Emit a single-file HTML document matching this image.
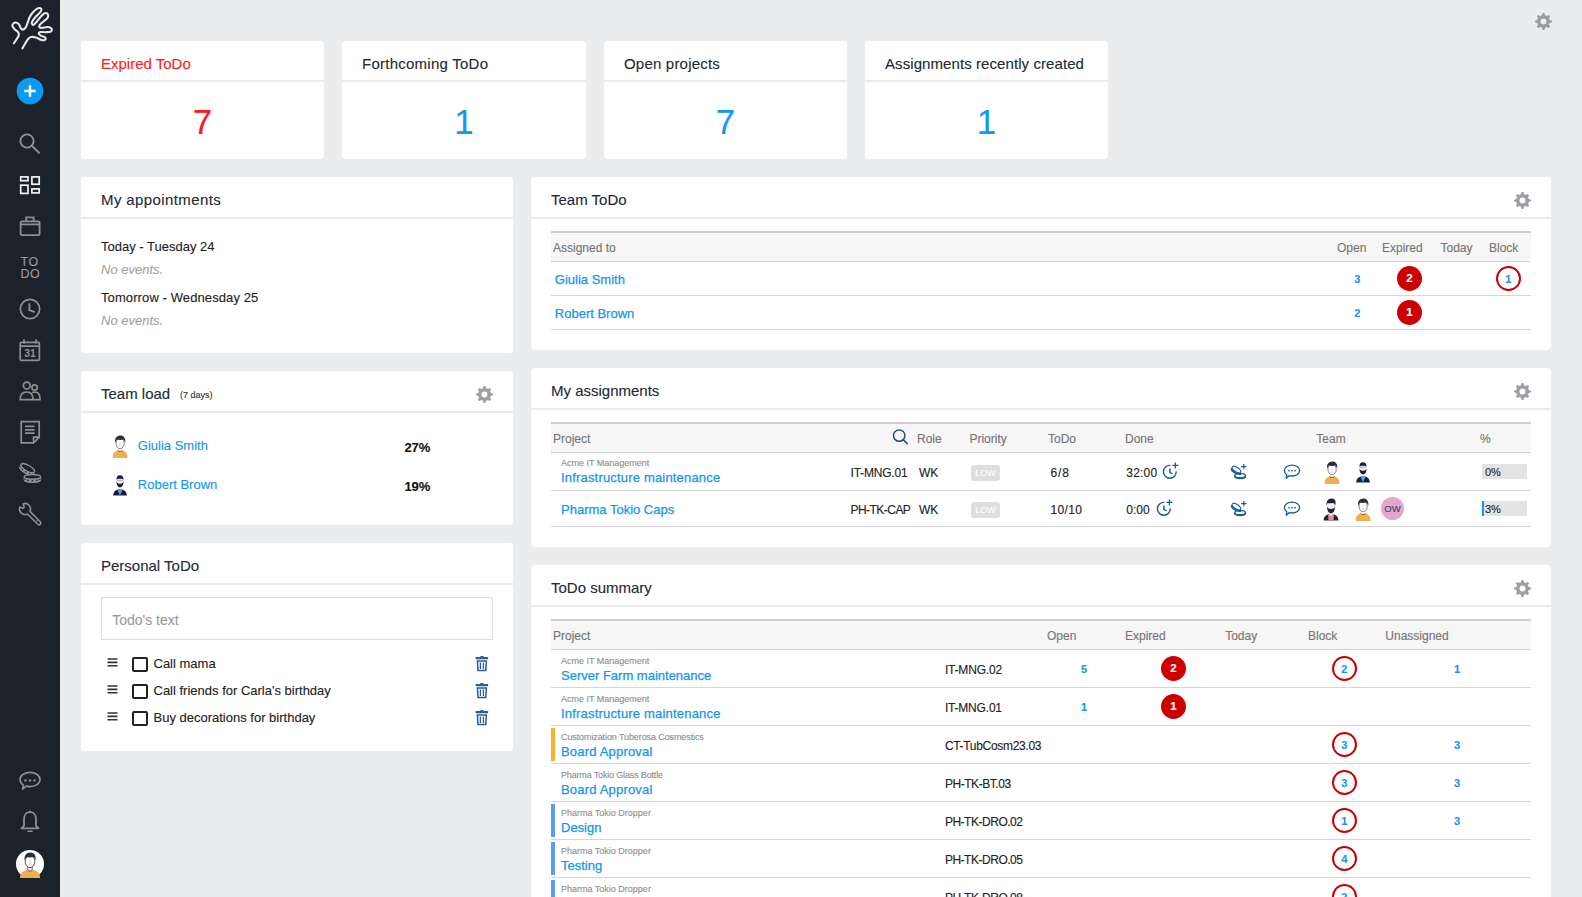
<!DOCTYPE html>
<html><head><meta charset="utf-8"><style>
html,body{margin:0;padding:0;width:1582px;height:897px;overflow:hidden;background:#ebecee;font-family:"Liberation Sans",sans-serif;}
.t,.r,.s{position:absolute;}
.t{white-space:nowrap;-webkit-text-stroke:0.12px currentColor;}
</style></head><body>
<div class="r" style="left:0px;top:0px;width:60px;height:897px;background:#1c222b;"></div>
<svg class="s" style="left:0px;top:0px;" width="60" height="60" viewBox="0 0 60 60"><path d="M13.90 43.30 C14.70 42.02 17.98 37.42 18.70 35.60 C19.42 33.78 18.92 33.48 18.20 32.40 C17.48 31.32 15.38 30.27 14.40 29.10 C13.42 27.93 12.20 26.50 12.30 25.40 C12.40 24.30 13.93 22.72 15.00 22.50 C16.07 22.28 17.73 23.15 18.70 24.10 C19.67 25.05 20.15 27.28 20.80 28.20 C21.45 29.12 21.80 29.70 22.60 29.60 C23.40 29.50 24.72 28.87 25.60 27.60 C26.48 26.33 27.22 23.77 27.90 22.00 C28.58 20.23 28.82 18.67 29.70 17.00 C30.58 15.33 32.02 13.37 33.20 12.00 C34.38 10.63 35.67 9.47 36.80 8.80 C37.93 8.13 39.22 7.83 40.00 8.00 C40.78 8.17 41.52 9.03 41.50 9.80 C41.48 10.57 40.90 11.40 39.90 12.60 C38.90 13.80 36.82 15.43 35.50 17.00 C34.18 18.57 32.52 20.73 32.00 22.00 C31.48 23.27 32.03 24.20 32.40 24.60 C32.77 25.00 33.53 24.83 34.20 24.40 C34.87 23.97 35.35 23.23 36.40 22.00 C37.45 20.77 39.23 18.40 40.50 17.00 C41.77 15.60 42.95 14.23 44.00 13.60 C45.05 12.97 46.10 12.90 46.80 13.20 C47.50 13.50 48.13 14.53 48.20 15.40 C48.27 16.27 48.10 17.30 47.20 18.40 C46.30 19.50 44.07 20.90 42.80 22.00 C41.53 23.10 40.10 24.07 39.60 25.00 C39.10 25.93 39.33 27.13 39.80 27.60 C40.27 28.07 41.02 27.90 42.40 27.80 C43.78 27.70 46.57 26.83 48.10 27.00 C49.63 27.17 51.15 28.03 51.60 28.80 C52.05 29.57 51.82 31.03 50.80 31.60 C49.78 32.17 47.23 32.13 45.50 32.20 C43.77 32.27 41.52 31.73 40.40 32.00 C39.28 32.27 38.67 33.17 38.80 33.80 C38.93 34.43 40.17 35.22 41.20 35.80 C42.23 36.38 44.33 36.67 45.00 37.30 C45.67 37.93 45.78 39.15 45.20 39.60 C44.62 40.05 43.03 40.37 41.50 40.00 C39.97 39.63 37.75 37.90 36.00 37.40 C34.25 36.90 32.37 36.68 31.00 37.00 C29.63 37.32 29.23 37.40 27.80 39.30 C26.37 41.20 23.30 46.88 22.40 48.40" fill="none" stroke="#e6e6e6" stroke-width="2.1" stroke-linecap="round" stroke-linejoin="round"/></svg>
<svg class="s" style="left:16px;top:77px;" width="28" height="28" viewBox="0 0 28 28"><circle cx="14" cy="14" r="13.3" fill="#0c9bf3"/><path d="M8.3 14H19.7M14 8.3V19.7" stroke="#fff" stroke-width="2.4"/></svg>
<svg class="s" style="left:15px;top:128px;" width="30" height="30" viewBox="0 0 30 30"><circle cx="12" cy="13" r="6.6" fill="none" stroke="#8d8f93" stroke-width="1.9"/><path d="M16.8 17.8L24.6 25.3" stroke="#8d8f93" stroke-width="1.9"/></svg>
<svg class="s" style="left:15px;top:170px;" width="30" height="30" viewBox="0 0 30 30"><g fill="none" stroke="#f2f2f2" stroke-width="1.7"><rect x="5.7" y="6.9" width="7.3" height="3.8"/><rect x="5.7" y="15.2" width="7.3" height="8.2"/><rect x="16.9" y="6.9" width="7.3" height="7.3"/><rect x="16.9" y="18.9" width="7.3" height="4"/></g></svg>
<svg class="s" style="left:15px;top:211px;" width="30" height="30" viewBox="0 0 30 30"><g fill="none" stroke="#8d8f93" stroke-width="1.8"><rect x="5.6" y="10.4" width="19" height="13.8" rx="1.6"/><path d="M5.6 13.4H24.6"/><path d="M11.2 10.2V6.4H18.6V10.2"/></g></svg>
<div class="t" style="left:20.60px;top:256.02px;font-size:12.5px;line-height:12.5px;color:#9a9b9e;font-weight:400;font-style:normal;letter-spacing:0.4px;">TO</div>
<div class="t" style="left:20.60px;top:268.12px;font-size:12.5px;line-height:12.5px;color:#9a9b9e;font-weight:400;font-style:normal;letter-spacing:0.4px;">DO</div>
<svg class="s" style="left:15px;top:294px;" width="30" height="30" viewBox="0 0 30 30"><g fill="none" stroke="#8d8f93" stroke-width="1.8"><circle cx="15" cy="15" r="9.6"/><path d="M14.4 9.2V16.2L19.8 18.2"/></g></svg>
<svg class="s" style="left:15px;top:335px;" width="30" height="30" viewBox="0 0 30 30"><g fill="none" stroke="#8d8f93" stroke-width="1.7"><rect x="5.2" y="7.4" width="19.2" height="18" rx="1.2"/><path d="M5.2 11.2H24.4M9 4.2V8.4M21 4.2V8.4"/></g><text x="15.1" y="22.2" font-family="Liberation Sans" font-size="10.4" font-weight="700" fill="#8d8f93" text-anchor="middle">31</text></svg>
<svg class="s" style="left:15px;top:376px;" width="30" height="30" viewBox="0 0 30 30"><g fill="none" stroke="#8d8f93" stroke-width="1.7"><circle cx="11.8" cy="9.6" r="3.4"/><circle cx="19.6" cy="11.6" r="2.7"/><path d="M5.2 23.6C5.2 18.8 7.8 16 11.6 16C15.4 16 18 18.8 18 23.6Z"/><path d="M17.2 16.8C18 16.2 18.8 16 19.8 16C23 16 25 18.8 25 23.6H18"/></g></svg>
<svg class="s" style="left:15px;top:417px;" width="30" height="30" viewBox="0 0 30 30"><g fill="none" stroke="#8d8f93" stroke-width="1.7"><path d="M6.2 4.6H24.2V20.2L18.6 25.8H6.2Z"/><path d="M24.2 20.2H18.6V25.8"/><path d="M10 9.4H19.6M10 12.8H19.6M10 16.2H19.6"/></g></svg>
<svg class="s" style="left:15px;top:458px;" width="30" height="30" viewBox="0 0 30 30"><g transform="rotate(30 12.8 10.2)"><path d="M5.20 10.20A7.6 2.9 0 0 0 20.40 10.20L20.40 12.80A7.6 2.9 0 0 1 5.20 12.80Z" fill="#8d8f93" stroke="#8d8f93" stroke-width="1.1"/><rect x="5.35" y="11.62" width="1.6" height="1.4" fill="#1c222b"/><rect x="7.89" y="12.96" width="1.6" height="1.4" fill="#1c222b"/><rect x="12.00" y="13.47" width="1.6" height="1.4" fill="#1c222b"/><rect x="16.11" y="12.96" width="1.6" height="1.4" fill="#1c222b"/><rect x="18.65" y="11.62" width="1.6" height="1.4" fill="#1c222b"/><ellipse cx="12.8" cy="10.2" rx="7.6" ry="2.9" fill="#1c222b" stroke="#8d8f93" stroke-width="1.3"/></g><g transform="rotate(0 17.4 18.8)"><path d="M9.20 18.80A8.2 2.3 0 0 0 25.60 18.80L25.60 22.10A8.2 2.3 0 0 1 9.20 22.10Z" fill="#8d8f93" stroke="#8d8f93" stroke-width="1.1"/><rect x="9.43" y="20.40" width="1.6" height="1.4" fill="#1c222b"/><rect x="12.17" y="21.46" width="1.6" height="1.4" fill="#1c222b"/><rect x="16.60" y="21.87" width="1.6" height="1.4" fill="#1c222b"/><rect x="21.03" y="21.46" width="1.6" height="1.4" fill="#1c222b"/><rect x="23.77" y="20.40" width="1.6" height="1.4" fill="#1c222b"/><ellipse cx="17.4" cy="18.8" rx="8.2" ry="2.3" fill="#1c222b" stroke="#8d8f93" stroke-width="1.3"/></g></svg>
<svg class="s" style="left:15px;top:499px;" width="30" height="30" viewBox="0 0 30 30"><path d="M12.41 14.95L22.73 25.27A1.8 1.8 0 0 0 25.27 22.73L14.95 12.41A5.5 5.5 0 0 0 8.12 4.83L9.3 8L8 9.3L4.83 8.12A5.5 5.5 0 0 0 12.41 14.95Z" fill="none" stroke="#8d8f93" stroke-width="1.6" stroke-linejoin="round"/><circle cx="22" cy="21.8" r="0.8" fill="#8d8f93"/></svg>
<svg class="s" style="left:15px;top:765px;" width="30" height="30" viewBox="0 0 30 30"><path d="M15 7.4C20.6 7.4 25 10.6 25 14.6C25 18.6 20.6 21.6 15 21.6C13.6 21.6 12.4 21.4 11.2 21.1L7.6 24.2L8.4 20.2C6.2 18.8 5 16.8 5 14.6C5 10.6 9.4 7.4 15 7.4Z" fill="none" stroke="#8d8f93" stroke-width="1.6" stroke-linejoin="round"/><circle cx="10.4" cy="15.4" r="1.2" fill="#8d8f93"/><circle cx="15" cy="15.4" r="1.2" fill="#8d8f93"/><circle cx="19.5" cy="15.4" r="1.2" fill="#8d8f93"/></svg>
<svg class="s" style="left:15px;top:806px;" width="30" height="30" viewBox="0 0 30 30"><g fill="none" stroke="#8d8f93" stroke-width="1.8" stroke-linejoin="round"><path d="M15 6.2C18.6 6.2 21 9 21 13V19.8L23.6 22.4H6.4L9 19.8V13C9 9 11.4 6.2 15 6.2Z"/></g><circle cx="15" cy="5.6" r="1.1" fill="#8d8f93"/><path d="M13 25.2H17" stroke="#8d8f93" stroke-width="1.6" stroke-linecap="round"/></svg>
<div class="r" style="left:16px;top:850px;width:28px;height:28px;border-radius:50%;background:#fff;overflow:hidden"></div>
<svg class="s" style="left:16px;top:850px;" width="28" height="28" viewBox="0 0 28 28"><path d="M4 28C4 22.6 7.6 19.8 14 19.6C20.4 19.8 24 22.6 24 28Z" fill="#efb14e"/><path d="M11.8 16V20.2C12.6 21.4 15.4 21.4 16.2 20.2V16Z" fill="#fff" stroke="#2a2d3e" stroke-width="0.7"/><ellipse cx="14" cy="11.6" rx="4.8" ry="6" fill="#fff" stroke="#2a2d3e" stroke-width="0.8"/><path d="M8.6 10.6C7.8 5.8 10.4 2.4 14.2 2.4C18 2.4 20.4 5.2 19.6 10.6C19 8.4 18 7.2 17.2 7C15.2 7.6 12.8 7.6 10.6 7C9.8 7.8 9.2 9 8.6 10.6Z" fill="#2a2d3e"/><path d="M14 9.6V13.8M12.2 15H15.8" stroke="#e8a0a8" stroke-width="0.7"/></svg>
<svg class="s" style="left:1534.5px;top:12.5px;" width="17" height="17" viewBox="0 0 17 17"><path fill-rule="evenodd" d="M14.77 6.93 L16.96 7.63 L16.96 9.37 L14.77 10.07 L14.04 11.82 L15.09 13.87 L13.87 15.09 L11.82 14.04 L10.07 14.77 L9.37 16.96 L7.63 16.96 L6.93 14.77 L5.18 14.04 L3.13 15.09 L1.91 13.87 L2.96 11.82 L2.23 10.07 L0.04 9.37 L0.04 7.63 L2.23 6.93 L2.96 5.18 L1.91 3.13 L3.13 1.91 L5.18 2.96 L6.93 2.23 L7.63 0.04 L9.37 0.04 L10.07 2.23 L11.82 2.96 L13.87 1.91 L15.09 3.13 L14.04 5.18Z M11.47 8.50 A2.97 2.97 0 1 0 5.53 8.50 A2.97 2.97 0 1 0 11.47 8.50Z" fill="#9a9ca1"/></svg>
<div class="r" style="left:81px;top:41px;width:243px;height:118px;background:#fff;border-radius:4px;"></div>
<div class="r" style="left:81px;top:80px;width:243px;height:2px;background:#e9eaed;"></div>
<div class="t" style="left:101.00px;top:56.30px;font-size:15px;line-height:15px;color:#ff2020;font-weight:400;font-style:normal;letter-spacing:0px;">Expired ToDo</div>
<div class="t" style="left:52.50px;width:300px;text-align:center;top:104.17px;font-size:35px;line-height:35px;color:#ff1a1a;font-weight:400;font-style:normal;">7</div>
<div class="r" style="left:342px;top:41px;width:244px;height:118px;background:#fff;border-radius:4px;"></div>
<div class="r" style="left:342px;top:80px;width:244px;height:2px;background:#e9eaed;"></div>
<div class="t" style="left:362.00px;top:56.30px;font-size:15px;line-height:15px;color:#222a33;font-weight:400;font-style:normal;letter-spacing:0.25px;">Forthcoming ToDo</div>
<div class="t" style="left:314.00px;width:300px;text-align:center;top:104.17px;font-size:35px;line-height:35px;color:#0f99f2;font-weight:400;font-style:normal;">1</div>
<div class="r" style="left:604px;top:41px;width:243px;height:118px;background:#fff;border-radius:4px;"></div>
<div class="r" style="left:604px;top:80px;width:243px;height:2px;background:#e9eaed;"></div>
<div class="t" style="left:624.00px;top:56.30px;font-size:15px;line-height:15px;color:#222a33;font-weight:400;font-style:normal;letter-spacing:0.2px;">Open projects</div>
<div class="t" style="left:575.50px;width:300px;text-align:center;top:104.17px;font-size:35px;line-height:35px;color:#0f99f2;font-weight:400;font-style:normal;">7</div>
<div class="r" style="left:865px;top:41px;width:243px;height:118px;background:#fff;border-radius:4px;"></div>
<div class="r" style="left:865px;top:80px;width:243px;height:2px;background:#e9eaed;"></div>
<div class="t" style="left:885.00px;top:56.30px;font-size:15px;line-height:15px;color:#222a33;font-weight:400;font-style:normal;letter-spacing:0.08px;">Assignments recently created</div>
<div class="t" style="left:836.50px;width:300px;text-align:center;top:104.17px;font-size:35px;line-height:35px;color:#0f99f2;font-weight:400;font-style:normal;">1</div>
<div class="r" style="left:81px;top:177px;width:432px;height:176px;background:#fff;border-radius:4px;"></div>
<div class="r" style="left:81px;top:217px;width:432px;height:2px;background:#e9eaed;"></div>
<div class="t" style="left:101.00px;top:192.30px;font-size:15px;line-height:15px;color:#222a33;font-weight:400;font-style:normal;letter-spacing:0.4px;">My appointments</div>
<div class="t" style="left:101.00px;top:240.20px;font-size:13px;line-height:13px;color:#1d1d1d;font-weight:400;font-style:normal;">Today - Tuesday 24</div>
<div class="t" style="left:101.00px;top:262.80px;font-size:13px;line-height:13px;color:#a3a3a3;font-weight:400;font-style:italic;">No events.</div>
<div class="t" style="left:101.00px;top:291.00px;font-size:13px;line-height:13px;color:#1d1d1d;font-weight:400;font-style:normal;letter-spacing:0.1px;">Tomorrow - Wednesday 25</div>
<div class="t" style="left:101.00px;top:313.70px;font-size:13px;line-height:13px;color:#a3a3a3;font-weight:400;font-style:italic;">No events.</div>
<div class="r" style="left:81px;top:371px;width:432px;height:154px;background:#fff;border-radius:4px;"></div>
<div class="r" style="left:81px;top:411px;width:432px;height:2px;background:#e9eaed;"></div>
<div class="t" style="left:101.00px;top:386.30px;font-size:15px;line-height:15px;color:#222a33;font-weight:400;font-style:normal;letter-spacing:0px;">Team load</div>
<svg class="s" style="left:475.5px;top:386.0px;" width="17" height="17" viewBox="0 0 17 17"><path fill-rule="evenodd" d="M14.77 6.93 L16.96 7.63 L16.96 9.37 L14.77 10.07 L14.04 11.82 L15.09 13.87 L13.87 15.09 L11.82 14.04 L10.07 14.77 L9.37 16.96 L7.63 16.96 L6.93 14.77 L5.18 14.04 L3.13 15.09 L1.91 13.87 L2.96 11.82 L2.23 10.07 L0.04 9.37 L0.04 7.63 L2.23 6.93 L2.96 5.18 L1.91 3.13 L3.13 1.91 L5.18 2.96 L6.93 2.23 L7.63 0.04 L9.37 0.04 L10.07 2.23 L11.82 2.96 L13.87 1.91 L15.09 3.13 L14.04 5.18Z M11.47 8.50 A2.97 2.97 0 1 0 5.53 8.50 A2.97 2.97 0 1 0 11.47 8.50Z" fill="#9c9fa5"/></svg>
<div class="t" style="left:180.00px;top:391.38px;font-size:9px;line-height:9px;color:#333;font-weight:400;font-style:normal;">(7 days)</div>
<svg class="s" style="left:112px;top:434px;" width="16" height="24" viewBox="0 0 16 24"><path d="M0.7 23.4C0.7 18.8 3.4 16.2 8 16C12.6 16.2 15.5 18.8 15.5 23.4C15.5 23.8 15.2 24 14.8 24H1.4C1 24 0.7 23.8 0.7 23.4Z" fill="#efb14e"/><path d="M5.6 16.4C6.4 17.6 9.8 17.6 10.6 16.4" fill="none" stroke="#2a2d3e" stroke-width="0.7"/><path d="M6.6 13.2V16.6C7.2 17.2 9 17.2 9.6 16.6V13.2Z" fill="#fff"/><ellipse cx="8.1" cy="9.4" rx="4.1" ry="5.4" fill="#fff" stroke="#2a2d3e" stroke-width="0.6"/><path d="M3.2 8.8C2.4 4.4 4.6 1.4 8.2 1.4C11.8 1.4 14 4 13.2 8.8C12.8 7.4 12.2 6.2 11.2 5.6C9.2 6.2 6.8 6.2 5 5.6C4.2 6.4 3.6 7.4 3.2 8.8Z" fill="#2a2d3e"/><path d="M8 7.8V11.2M6.6 12.2H9.4" stroke="#e8a0a8" stroke-width="0.6"/></svg>
<div class="t" style="left:137.80px;top:439.30px;font-size:13px;line-height:13px;color:#1296f0;font-weight:400;font-style:normal;">Giulia Smith</div>
<div class="t" style="left:404.40px;top:440.50px;font-size:13px;line-height:13px;color:#111;font-weight:700;font-style:normal;">27%</div>
<svg class="s" style="left:112px;top:473px;" width="16" height="24" viewBox="0 0 16 24"><path d="M1.2 22.4C1.2 18.6 3.8 16.4 8 16.2C12.2 16.4 14.8 18.6 14.8 22.4Z" fill="#15213f"/><path d="M5.4 16.6L8 22.4L10.6 16.6C9.8 16.3 6.2 16.3 5.4 16.6Z" fill="#6f9ad6"/><ellipse cx="8" cy="8.4" rx="3.8" ry="4.6" fill="#e9e9ef"/><path d="M4.4 8.8C4.6 12.6 6 14.4 8 14.4C10 14.4 11.4 12.6 11.6 8.8C10.8 10.4 9.4 10.8 8 10.8C6.6 10.8 5.2 10.4 4.4 8.8Z" fill="#15213f"/><path d="M4.4 6.8C4.4 3.6 5.8 2.2 8 2.2C10.2 2.2 11.6 3.6 11.6 6.8C10.6 5.4 5.4 5.4 4.4 6.8Z" fill="#15213f"/><path d="M4.6 7.4H11.4" stroke="#9aa0b0" stroke-width="0.7"/></svg>
<div class="t" style="left:137.80px;top:478.20px;font-size:13px;line-height:13px;color:#1296f0;font-weight:400;font-style:normal;">Robert Brown</div>
<div class="t" style="left:404.40px;top:479.50px;font-size:13px;line-height:13px;color:#111;font-weight:700;font-style:normal;">19%</div>
<div class="r" style="left:81px;top:543px;width:432px;height:208px;background:#fff;border-radius:4px;"></div>
<div class="r" style="left:81px;top:583px;width:432px;height:2px;background:#e9eaed;"></div>
<div class="t" style="left:101.00px;top:558.30px;font-size:15px;line-height:15px;color:#222a33;font-weight:400;font-style:normal;letter-spacing:0px;">Personal ToDo</div>
<div class="r" style="left:101px;top:597px;width:392px;height:43px;box-sizing:border-box;border:1px solid #dcdcdc;background:#fff"></div>
<div class="t" style="left:112.20px;top:613.15px;font-size:14px;line-height:14px;color:#9a9a9a;font-weight:400;font-style:normal;">Todo's text</div>
<svg class="s" style="left:107px;top:658px;" width="11" height="9" viewBox="0 0 11 9"><path d="M0.5 1H10.5M0.5 4.4H10.5M0.5 7.8H10.5" stroke="#333" stroke-width="1.6"/></svg>
<div class="r" style="left:132px;top:657px;width:16px;height:15px;box-sizing:border-box;border:2px solid #222;border-radius:2px;background:#fff"></div>
<div class="t" style="left:153.50px;top:657.00px;font-size:13px;line-height:13px;color:#222;font-weight:400;font-style:normal;">Call mama</div>
<svg class="s" style="left:475px;top:656px;" width="14" height="16" viewBox="0 0 14 16"><rect x="0.6" y="1" width="12.6" height="2.2" rx="0.6" fill="#2a5d94"/><rect x="5.4" y="0" width="3" height="1.4" fill="#2a5d94"/><path d="M2.4 5H11.4L10.8 14.4H3Z" fill="none" stroke="#2a5d94" stroke-width="1.5"/><path d="M5.4 6.4V13M8.4 6.4V13" stroke="#2a5d94" stroke-width="1.3"/></svg>
<svg class="s" style="left:107px;top:685px;" width="11" height="9" viewBox="0 0 11 9"><path d="M0.5 1H10.5M0.5 4.4H10.5M0.5 7.8H10.5" stroke="#333" stroke-width="1.6"/></svg>
<div class="r" style="left:132px;top:684px;width:16px;height:15px;box-sizing:border-box;border:2px solid #222;border-radius:2px;background:#fff"></div>
<div class="t" style="left:153.50px;top:684.00px;font-size:13px;line-height:13px;color:#222;font-weight:400;font-style:normal;">Call friends for Carla's birthday</div>
<svg class="s" style="left:475px;top:683px;" width="14" height="16" viewBox="0 0 14 16"><rect x="0.6" y="1" width="12.6" height="2.2" rx="0.6" fill="#2a5d94"/><rect x="5.4" y="0" width="3" height="1.4" fill="#2a5d94"/><path d="M2.4 5H11.4L10.8 14.4H3Z" fill="none" stroke="#2a5d94" stroke-width="1.5"/><path d="M5.4 6.4V13M8.4 6.4V13" stroke="#2a5d94" stroke-width="1.3"/></svg>
<svg class="s" style="left:107px;top:712px;" width="11" height="9" viewBox="0 0 11 9"><path d="M0.5 1H10.5M0.5 4.4H10.5M0.5 7.8H10.5" stroke="#333" stroke-width="1.6"/></svg>
<div class="r" style="left:132px;top:711px;width:16px;height:15px;box-sizing:border-box;border:2px solid #222;border-radius:2px;background:#fff"></div>
<div class="t" style="left:153.50px;top:711.00px;font-size:13px;line-height:13px;color:#222;font-weight:400;font-style:normal;">Buy decorations for birthday</div>
<svg class="s" style="left:475px;top:710px;" width="14" height="16" viewBox="0 0 14 16"><rect x="0.6" y="1" width="12.6" height="2.2" rx="0.6" fill="#2a5d94"/><rect x="5.4" y="0" width="3" height="1.4" fill="#2a5d94"/><path d="M2.4 5H11.4L10.8 14.4H3Z" fill="none" stroke="#2a5d94" stroke-width="1.5"/><path d="M5.4 6.4V13M8.4 6.4V13" stroke="#2a5d94" stroke-width="1.3"/></svg>
<!--RIGHT-->
<div class="r" style="left:531px;top:177px;width:1020px;height:173px;background:#fff;border-radius:4px;"></div>
<div class="r" style="left:531px;top:217px;width:1020px;height:2px;background:#e9eaed;"></div>
<div class="t" style="left:551.00px;top:192.30px;font-size:15px;line-height:15px;color:#222a33;font-weight:400;font-style:normal;">Team ToDo</div>
<svg class="s" style="left:1513.5px;top:192.0px;" width="17" height="17" viewBox="0 0 17 17"><path fill-rule="evenodd" d="M14.77 6.93 L16.96 7.63 L16.96 9.37 L14.77 10.07 L14.04 11.82 L15.09 13.87 L13.87 15.09 L11.82 14.04 L10.07 14.77 L9.37 16.96 L7.63 16.96 L6.93 14.77 L5.18 14.04 L3.13 15.09 L1.91 13.87 L2.96 11.82 L2.23 10.07 L0.04 9.37 L0.04 7.63 L2.23 6.93 L2.96 5.18 L1.91 3.13 L3.13 1.91 L5.18 2.96 L6.93 2.23 L7.63 0.04 L9.37 0.04 L10.07 2.23 L11.82 2.96 L13.87 1.91 L15.09 3.13 L14.04 5.18Z M11.47 8.50 A2.97 2.97 0 1 0 5.53 8.50 A2.97 2.97 0 1 0 11.47 8.50Z" fill="#9c9fa5"/></svg>
<div class="r" style="left:551px;top:231px;width:980px;height:2px;background:#cdced2;"></div>
<div class="r" style="left:551px;top:233px;width:980px;height:28px;background:#f6f6f6;"></div>
<div class="r" style="left:551px;top:261px;width:980px;height:1px;background:#d2d3d6;"></div>
<div class="t" style="left:553.00px;top:242.14px;font-size:12px;line-height:12px;color:#767676;font-weight:400;font-style:normal;-webkit-text-stroke:0.15px #767676;">Assigned to</div>
<div class="t" style="left:1337.00px;top:242.14px;font-size:12px;line-height:12px;color:#767676;font-weight:400;font-style:normal;-webkit-text-stroke:0.15px #767676;">Open</div>
<div class="t" style="left:1382.00px;top:242.14px;font-size:12px;line-height:12px;color:#767676;font-weight:400;font-style:normal;-webkit-text-stroke:0.15px #767676;">Expired</div>
<div class="t" style="left:1440.50px;top:242.14px;font-size:12px;line-height:12px;color:#767676;font-weight:400;font-style:normal;-webkit-text-stroke:0.15px #767676;">Today</div>
<div class="t" style="left:1489.00px;top:242.14px;font-size:12px;line-height:12px;color:#767676;font-weight:400;font-style:normal;-webkit-text-stroke:0.15px #767676;">Block</div>
<div class="r" style="left:551px;top:295px;width:980px;height:1px;background:#d6d7da;"></div>
<div class="r" style="left:551px;top:329px;width:980px;height:1px;background:#d6d7da;"></div>
<div class="t" style="left:554.80px;top:272.70px;font-size:13px;line-height:13px;color:#1296f0;font-weight:400;font-style:normal;-webkit-text-stroke:0.25px #1296f0;">Giulia Smith</div>
<div class="t" style="left:1207.40px;width:300px;text-align:center;top:273.89px;font-size:11px;line-height:11px;color:#1296f0;font-weight:700;font-style:normal;">3</div>
<div class="t" style="left:1397.0px;top:265.9px;width:25px;height:25px;border-radius:50%;background:#cc0000;color:#fff;font-size:11.5px;font-weight:700;line-height:25px;text-align:center;">2</div>
<div class="t" style="left:1495.9px;top:265.9px;width:25px;height:25px;border-radius:50%;box-sizing:border-box;border:2px solid #c80000;color:#1795ef;font-size:11px;font-weight:700;line-height:22px;text-align:center;">1</div>
<div class="t" style="left:554.80px;top:307.00px;font-size:13px;line-height:13px;color:#1296f0;font-weight:400;font-style:normal;-webkit-text-stroke:0.25px #1296f0;">Robert Brown</div>
<div class="t" style="left:1207.40px;width:300px;text-align:center;top:308.19px;font-size:11px;line-height:11px;color:#1296f0;font-weight:700;font-style:normal;">2</div>
<div class="t" style="left:1397.0px;top:300.0px;width:25px;height:25px;border-radius:50%;background:#cc0000;color:#fff;font-size:11.5px;font-weight:700;line-height:25px;text-align:center;">1</div>
<div class="r" style="left:531px;top:368px;width:1020px;height:179px;background:#fff;border-radius:4px;"></div>
<div class="r" style="left:531px;top:408px;width:1020px;height:2px;background:#e9eaed;"></div>
<div class="t" style="left:551.00px;top:383.30px;font-size:15px;line-height:15px;color:#222a33;font-weight:400;font-style:normal;">My assignments</div>
<svg class="s" style="left:1513.5px;top:383.0px;" width="17" height="17" viewBox="0 0 17 17"><path fill-rule="evenodd" d="M14.77 6.93 L16.96 7.63 L16.96 9.37 L14.77 10.07 L14.04 11.82 L15.09 13.87 L13.87 15.09 L11.82 14.04 L10.07 14.77 L9.37 16.96 L7.63 16.96 L6.93 14.77 L5.18 14.04 L3.13 15.09 L1.91 13.87 L2.96 11.82 L2.23 10.07 L0.04 9.37 L0.04 7.63 L2.23 6.93 L2.96 5.18 L1.91 3.13 L3.13 1.91 L5.18 2.96 L6.93 2.23 L7.63 0.04 L9.37 0.04 L10.07 2.23 L11.82 2.96 L13.87 1.91 L15.09 3.13 L14.04 5.18Z M11.47 8.50 A2.97 2.97 0 1 0 5.53 8.50 A2.97 2.97 0 1 0 11.47 8.50Z" fill="#9c9fa5"/></svg>
<div class="r" style="left:551px;top:422px;width:980px;height:2px;background:#cdced2;"></div>
<div class="r" style="left:551px;top:424px;width:980px;height:28px;background:#f6f6f6;"></div>
<div class="r" style="left:551px;top:452px;width:980px;height:1px;background:#d2d3d6;"></div>
<div class="t" style="left:553.00px;top:433.14px;font-size:12px;line-height:12px;color:#767676;font-weight:400;font-style:normal;-webkit-text-stroke:0.15px #767676;">Project</div>
<div class="t" style="left:917.00px;top:433.14px;font-size:12px;line-height:12px;color:#767676;font-weight:400;font-style:normal;-webkit-text-stroke:0.15px #767676;">Role</div>
<div class="t" style="left:969.40px;top:433.14px;font-size:12px;line-height:12px;color:#767676;font-weight:400;font-style:normal;-webkit-text-stroke:0.15px #767676;">Priority</div>
<div class="t" style="left:1048.00px;top:433.14px;font-size:12px;line-height:12px;color:#767676;font-weight:400;font-style:normal;-webkit-text-stroke:0.15px #767676;">ToDo</div>
<div class="t" style="left:1125.00px;top:433.14px;font-size:12px;line-height:12px;color:#767676;font-weight:400;font-style:normal;-webkit-text-stroke:0.15px #767676;">Done</div>
<div class="t" style="left:1316.30px;top:433.14px;font-size:12px;line-height:12px;color:#767676;font-weight:400;font-style:normal;-webkit-text-stroke:0.15px #767676;">Team</div>
<div class="t" style="left:1480.00px;top:433.14px;font-size:12px;line-height:12px;color:#767676;font-weight:400;font-style:normal;-webkit-text-stroke:0.15px #767676;">%</div>
<svg class="s" style="left:891px;top:428px;" width="20" height="20" viewBox="0 0 20 20"><circle cx="8.2" cy="7.6" r="5.7" fill="none" stroke="#1f4f83" stroke-width="1.5"/><path d="M12.2 11.6L16.8 16.2" stroke="#1f4f83" stroke-width="1.6"/></svg>
<div class="r" style="left:551px;top:490px;width:980px;height:1px;background:#d6d7da;"></div>
<div class="r" style="left:551px;top:526px;width:980px;height:1px;background:#d6d7da;"></div>
<div class="t" style="left:561.00px;top:459.38px;font-size:9px;line-height:9px;color:#8e8e8e;font-weight:400;font-style:normal;">Acme IT Management</div>
<div class="t" style="left:561.00px;top:471.40px;font-size:13px;line-height:13px;color:#1296f0;font-weight:400;font-style:normal;letter-spacing:0.18px;-webkit-text-stroke:0.25px #1296f0;">Infrastructure maintenance</div>
<div class="t" style="left:850.50px;top:466.64px;font-size:12px;line-height:12px;color:#222;font-weight:400;font-style:normal;letter-spacing:-0.19px;">IT-MNG.01</div>
<div class="t" style="left:918.90px;top:466.64px;font-size:12px;line-height:12px;color:#222;font-weight:400;font-style:normal;">WK</div>
<div class="t" style="left:971px;top:465px;width:29px;height:16px;background:#dedede;border-radius:3px;color:#fff;font-size:9px;line-height:16px;text-align:center">LOW</div>
<div class="t" style="left:1050.40px;top:466.64px;font-size:12px;line-height:12px;color:#222;font-weight:400;font-style:normal;letter-spacing:0.9px;">6/8</div>
<div class="t" style="left:1126.30px;top:466.64px;font-size:12px;line-height:12px;color:#222;font-weight:400;font-style:normal;letter-spacing:0.2px;">32:00</div>
<svg class="s" style="left:1162px;top:462px;" width="18" height="18" viewBox="0 0 18 18"><g fill="none" stroke="#1b5a97" stroke-width="1.45"><path d="M14.2 9.4A6.4 6.4 0 1 1 8.4 3.4"/><path d="M7.9 6.6V10.4L10.6 12"/><path d="M13.4 0.4V6.6M10.4 3.4H16.4" stroke-width="1.25"/></g></svg>
<svg class="s" style="left:1229.5px;top:463px;" width="18" height="18" viewBox="0 0 18 18"><g fill="none" stroke="#1b5a97"><ellipse cx="6.4" cy="6.6" rx="4.9" ry="2.2" transform="rotate(32 6.4 6.6)" stroke-width="1.2"/><path d="M1.6 5.2C1.2 6.6 2.6 8.6 5 9.8C7.4 11 9.6 11.4 11 11" stroke-width="1.6"/><ellipse cx="10.1" cy="12.4" rx="5.3" ry="2.1" stroke-width="1.2"/><path d="M4.8 12.6V13.6C4.8 14.8 7.2 15.6 10.1 15.6C13 15.6 15.4 14.8 15.4 13.6V12.6" stroke-width="1.5"/><path d="M13.8 0.9V6.3M11.1 3.6H16.5" stroke-width="1.2"/></g></svg>
<svg class="s" style="left:1283px;top:463.5px;" width="18" height="16" viewBox="0 0 18 16"><path d="M9 1.2C13.4 1.2 16.6 3.6 16.6 6.6C16.6 9.6 13.4 12 9 12C8 12 7.2 11.9 6.4 11.6L3.2 14.2L3.8 10.8C2.2 9.8 1.4 8.3 1.4 6.6C1.4 3.6 4.6 1.2 9 1.2Z" fill="none" stroke="#1b5a97" stroke-width="1.3" stroke-linejoin="round"/><rect x="5.3" y="5.9" width="1.5" height="1.5" fill="#1b5a97"/><rect x="8.3" y="5.9" width="1.5" height="1.5" fill="#1b5a97"/><rect x="11.3" y="5.9" width="1.5" height="1.5" fill="#1b5a97"/></svg>
<svg class="s" style="left:1323.5px;top:459.5px;" width="16" height="24" viewBox="0 0 16 24"><path d="M0.7 23.4C0.7 18.8 3.4 16.2 8 16C12.6 16.2 15.5 18.8 15.5 23.4C15.5 23.8 15.2 24 14.8 24H1.4C1 24 0.7 23.8 0.7 23.4Z" fill="#efb14e"/><path d="M5.6 16.4C6.4 17.6 9.8 17.6 10.6 16.4" fill="none" stroke="#2a2d3e" stroke-width="0.7"/><path d="M6.6 13.2V16.6C7.2 17.2 9 17.2 9.6 16.6V13.2Z" fill="#fff"/><ellipse cx="8.1" cy="9.4" rx="4.1" ry="5.4" fill="#fff" stroke="#2a2d3e" stroke-width="0.6"/><path d="M3.2 8.8C2.4 4.4 4.6 1.4 8.2 1.4C11.8 1.4 14 4 13.2 8.8C12.8 7.4 12.2 6.2 11.2 5.6C9.2 6.2 6.8 6.2 5 5.6C4.2 6.4 3.6 7.4 3.2 8.8Z" fill="#2a2d3e"/><path d="M8 7.8V11.2M6.6 12.2H9.4" stroke="#e8a0a8" stroke-width="0.6"/></svg>
<svg class="s" style="left:1355px;top:459.8px;" width="16" height="24" viewBox="0 0 16 24"><path d="M1.2 22.4C1.2 18.6 3.8 16.4 8 16.2C12.2 16.4 14.8 18.6 14.8 22.4Z" fill="#15213f"/><path d="M5.4 16.6L8 22.4L10.6 16.6C9.8 16.3 6.2 16.3 5.4 16.6Z" fill="#6f9ad6"/><ellipse cx="8" cy="8.4" rx="3.8" ry="4.6" fill="#e9e9ef"/><path d="M4.4 8.8C4.6 12.6 6 14.4 8 14.4C10 14.4 11.4 12.6 11.6 8.8C10.8 10.4 9.4 10.8 8 10.8C6.6 10.8 5.2 10.4 4.4 8.8Z" fill="#15213f"/><path d="M4.4 6.8C4.4 3.6 5.8 2.2 8 2.2C10.2 2.2 11.6 3.6 11.6 6.8C10.6 5.4 5.4 5.4 4.4 6.8Z" fill="#15213f"/><path d="M4.6 7.4H11.4" stroke="#9aa0b0" stroke-width="0.7"/></svg>
<div class="r" style="left:1482px;top:464px;width:45px;height:15px;background:#e3e3e3;"></div>
<div class="t" style="left:1485.00px;top:466.69px;font-size:11px;line-height:11px;color:#222;font-weight:400;font-style:normal;">0%</div>
<div class="t" style="left:561.00px;top:502.60px;font-size:13px;line-height:13px;color:#1296f0;font-weight:400;font-style:normal;-webkit-text-stroke:0.25px #1296f0;">Pharma Tokio Caps</div>
<div class="t" style="left:850.50px;top:503.84px;font-size:12px;line-height:12px;color:#222;font-weight:400;font-style:normal;letter-spacing:-0.54px;">PH-TK-CAP</div>
<div class="t" style="left:918.90px;top:503.84px;font-size:12px;line-height:12px;color:#222;font-weight:400;font-style:normal;">WK</div>
<div class="t" style="left:971px;top:502px;width:29px;height:16px;background:#dedede;border-radius:3px;color:#fff;font-size:9px;line-height:16px;text-align:center">LOW</div>
<div class="t" style="left:1050.40px;top:503.84px;font-size:12px;line-height:12px;color:#222;font-weight:400;font-style:normal;letter-spacing:0.4px;">10/10</div>
<div class="t" style="left:1126.30px;top:503.84px;font-size:12px;line-height:12px;color:#222;font-weight:400;font-style:normal;">0:00</div>
<svg class="s" style="left:1155.5px;top:499px;" width="18" height="18" viewBox="0 0 18 18"><g fill="none" stroke="#1b5a97" stroke-width="1.45"><path d="M14.2 9.4A6.4 6.4 0 1 1 8.4 3.4"/><path d="M7.9 6.6V10.4L10.6 12"/><path d="M13.4 0.4V6.6M10.4 3.4H16.4" stroke-width="1.25"/></g></svg>
<svg class="s" style="left:1229.5px;top:500px;" width="18" height="18" viewBox="0 0 18 18"><g fill="none" stroke="#1b5a97"><ellipse cx="6.4" cy="6.6" rx="4.9" ry="2.2" transform="rotate(32 6.4 6.6)" stroke-width="1.2"/><path d="M1.6 5.2C1.2 6.6 2.6 8.6 5 9.8C7.4 11 9.6 11.4 11 11" stroke-width="1.6"/><ellipse cx="10.1" cy="12.4" rx="5.3" ry="2.1" stroke-width="1.2"/><path d="M4.8 12.6V13.6C4.8 14.8 7.2 15.6 10.1 15.6C13 15.6 15.4 14.8 15.4 13.6V12.6" stroke-width="1.5"/><path d="M13.8 0.9V6.3M11.1 3.6H16.5" stroke-width="1.2"/></g></svg>
<svg class="s" style="left:1283px;top:500.5px;" width="18" height="16" viewBox="0 0 18 16"><path d="M9 1.2C13.4 1.2 16.6 3.6 16.6 6.6C16.6 9.6 13.4 12 9 12C8 12 7.2 11.9 6.4 11.6L3.2 14.2L3.8 10.8C2.2 9.8 1.4 8.3 1.4 6.6C1.4 3.6 4.6 1.2 9 1.2Z" fill="none" stroke="#1b5a97" stroke-width="1.3" stroke-linejoin="round"/><rect x="5.3" y="5.9" width="1.5" height="1.5" fill="#1b5a97"/><rect x="8.3" y="5.9" width="1.5" height="1.5" fill="#1b5a97"/><rect x="11.3" y="5.9" width="1.5" height="1.5" fill="#1b5a97"/></svg>
<svg class="s" style="left:1323px;top:497px;" width="16" height="24" viewBox="0 0 16 24"><path d="M0.6 23.4C0.6 19.6 3.4 17.2 8 17C12.6 17.2 15.4 19.6 15.4 23.4Z" fill="#22243a"/><path d="M5 17.4L5.6 23.4H10.4L11 17.4C10 17.1 6 17.1 5 17.4Z" fill="#ef8a86"/><path d="M6.6 14V18C7 18.8 9 18.8 9.4 18V14Z" fill="#fff"/><ellipse cx="8" cy="9.4" rx="4" ry="5" fill="#eceef2"/><path d="M4 9.6C4 14 5.8 16.4 8 16.4C10.2 16.4 12 14 12 9.6C11.2 11.4 9.8 12 8 12C6.2 12 4.8 11.4 4 9.6Z" fill="#22243a"/><path d="M3.6 8.8C3 4.2 5 1.6 8.4 1.4C10.6 1.2 12.6 2.4 12.6 5C12.6 6.6 12.4 7.8 12.2 8.8C11.8 7 11 6.2 10 6C8.4 6.4 6.2 6.4 4.8 6C4.2 6.8 3.8 7.6 3.6 8.8Z" fill="#22243a"/></svg>
<svg class="s" style="left:1354.5px;top:497px;" width="16" height="24" viewBox="0 0 16 24"><path d="M0.7 23.4C0.7 18.8 3.4 16.2 8 16C12.6 16.2 15.5 18.8 15.5 23.4C15.5 23.8 15.2 24 14.8 24H1.4C1 24 0.7 23.8 0.7 23.4Z" fill="#efb14e"/><path d="M5.6 16.4C6.4 17.6 9.8 17.6 10.6 16.4" fill="none" stroke="#2a2d3e" stroke-width="0.7"/><path d="M6.6 13.2V16.6C7.2 17.2 9 17.2 9.6 16.6V13.2Z" fill="#fff"/><ellipse cx="8.1" cy="9.4" rx="4.1" ry="5.4" fill="#fff" stroke="#2a2d3e" stroke-width="0.6"/><path d="M3.2 8.8C2.4 4.4 4.6 1.4 8.2 1.4C11.8 1.4 14 4 13.2 8.8C12.8 7.4 12.2 6.2 11.2 5.6C9.2 6.2 6.8 6.2 5 5.6C4.2 6.4 3.6 7.4 3.2 8.8Z" fill="#2a2d3e"/><path d="M8 7.8V11.2M6.6 12.2H9.4" stroke="#e8a0a8" stroke-width="0.6"/></svg>
<div class="t" style="left:1381px;top:497px;width:23px;height:23px;border-radius:50%;background:#e8a4c9;color:#1f4a66;font-size:9.5px;line-height:23px;text-align:center">OW</div>
<div class="r" style="left:1482px;top:501px;width:45px;height:15px;background:#e3e3e3;"></div>
<div class="r" style="left:1482px;top:501px;width:1.5px;height:15px;background:#0f99f2;"></div>
<div class="t" style="left:1485.00px;top:503.69px;font-size:11px;line-height:11px;color:#222;font-weight:400;font-style:normal;">3%</div>
<div class="r" style="left:531px;top:565px;width:1020px;height:435px;background:#fff;border-radius:4px;"></div>
<div class="r" style="left:531px;top:605px;width:1020px;height:2px;background:#e9eaed;"></div>
<div class="t" style="left:551.00px;top:580.30px;font-size:15px;line-height:15px;color:#222a33;font-weight:400;font-style:normal;">ToDo summary</div>
<svg class="s" style="left:1513.5px;top:580.0px;" width="17" height="17" viewBox="0 0 17 17"><path fill-rule="evenodd" d="M14.77 6.93 L16.96 7.63 L16.96 9.37 L14.77 10.07 L14.04 11.82 L15.09 13.87 L13.87 15.09 L11.82 14.04 L10.07 14.77 L9.37 16.96 L7.63 16.96 L6.93 14.77 L5.18 14.04 L3.13 15.09 L1.91 13.87 L2.96 11.82 L2.23 10.07 L0.04 9.37 L0.04 7.63 L2.23 6.93 L2.96 5.18 L1.91 3.13 L3.13 1.91 L5.18 2.96 L6.93 2.23 L7.63 0.04 L9.37 0.04 L10.07 2.23 L11.82 2.96 L13.87 1.91 L15.09 3.13 L14.04 5.18Z M11.47 8.50 A2.97 2.97 0 1 0 5.53 8.50 A2.97 2.97 0 1 0 11.47 8.50Z" fill="#9c9fa5"/></svg>
<div class="r" style="left:551px;top:619px;width:980px;height:2px;background:#cdced2;"></div>
<div class="r" style="left:551px;top:621px;width:980px;height:28px;background:#f6f6f6;"></div>
<div class="r" style="left:551px;top:649px;width:980px;height:1px;background:#d2d3d6;"></div>
<div class="t" style="left:553.00px;top:630.14px;font-size:12px;line-height:12px;color:#767676;font-weight:400;font-style:normal;-webkit-text-stroke:0.15px #767676;">Project</div>
<div class="t" style="left:1047.00px;top:630.14px;font-size:12px;line-height:12px;color:#767676;font-weight:400;font-style:normal;-webkit-text-stroke:0.15px #767676;">Open</div>
<div class="t" style="left:1125.00px;top:630.14px;font-size:12px;line-height:12px;color:#767676;font-weight:400;font-style:normal;-webkit-text-stroke:0.15px #767676;">Expired</div>
<div class="t" style="left:1225.20px;top:630.14px;font-size:12px;line-height:12px;color:#767676;font-weight:400;font-style:normal;-webkit-text-stroke:0.15px #767676;">Today</div>
<div class="t" style="left:1308.00px;top:630.14px;font-size:12px;line-height:12px;color:#767676;font-weight:400;font-style:normal;-webkit-text-stroke:0.15px #767676;">Block</div>
<div class="t" style="left:1385.30px;top:630.14px;font-size:12px;line-height:12px;color:#767676;font-weight:400;font-style:normal;-webkit-text-stroke:0.15px #767676;">Unassigned</div>
<div class="r" style="left:551px;top:687px;width:980px;height:1px;background:#d6d7da;"></div>
<div class="t" style="left:561.00px;top:656.78px;font-size:9px;line-height:9px;color:#8e8e8e;font-weight:400;font-style:normal;letter-spacing:0px;">Acme IT Management</div>
<div class="t" style="left:561.00px;top:668.80px;font-size:13px;line-height:13px;color:#1296f0;font-weight:400;font-style:normal;letter-spacing:0px;-webkit-text-stroke:0.25px #1296f0;">Server Farm maintenance</div>
<div class="t" style="left:944.90px;top:663.84px;font-size:12px;line-height:12px;color:#222;font-weight:400;font-style:normal;letter-spacing:-0.18px;">IT-MNG.02</div>
<div class="t" style="left:934.00px;width:300px;text-align:center;top:663.69px;font-size:11px;line-height:11px;color:#1296f0;font-weight:700;font-style:normal;">5</div>
<div class="t" style="left:1161.0px;top:656.0px;width:25px;height:25px;border-radius:50%;background:#cc0000;color:#fff;font-size:11.5px;font-weight:700;line-height:25px;text-align:center;">2</div>
<div class="t" style="left:1331.9px;top:656.0px;width:25px;height:25px;border-radius:50%;box-sizing:border-box;border:2px solid #c80000;color:#1795ef;font-size:11px;font-weight:700;line-height:22px;text-align:center;">2</div>
<div class="t" style="left:1307.00px;width:300px;text-align:center;top:663.69px;font-size:11px;line-height:11px;color:#1296f0;font-weight:700;font-style:normal;">1</div>
<div class="r" style="left:551px;top:725px;width:980px;height:1px;background:#d6d7da;"></div>
<div class="t" style="left:561.00px;top:694.78px;font-size:9px;line-height:9px;color:#8e8e8e;font-weight:400;font-style:normal;letter-spacing:0px;">Acme IT Management</div>
<div class="t" style="left:561.00px;top:706.80px;font-size:13px;line-height:13px;color:#1296f0;font-weight:400;font-style:normal;letter-spacing:0.19px;-webkit-text-stroke:0.25px #1296f0;">Infrastructure maintenance</div>
<div class="t" style="left:944.90px;top:701.84px;font-size:12px;line-height:12px;color:#222;font-weight:400;font-style:normal;letter-spacing:-0.19px;">IT-MNG.01</div>
<div class="t" style="left:934.00px;width:300px;text-align:center;top:701.69px;font-size:11px;line-height:11px;color:#1296f0;font-weight:700;font-style:normal;">1</div>
<div class="t" style="left:1161.0px;top:694.0px;width:25px;height:25px;border-radius:50%;background:#cc0000;color:#fff;font-size:11.5px;font-weight:700;line-height:25px;text-align:center;">1</div>
<div class="r" style="left:551px;top:763px;width:980px;height:1px;background:#d6d7da;"></div>
<div class="r" style="left:551px;top:728px;width:4px;height:33px;background:#fbb12d;"></div>
<div class="t" style="left:561.00px;top:732.78px;font-size:9px;line-height:9px;color:#8e8e8e;font-weight:400;font-style:normal;letter-spacing:-0.1px;">Customization Tuberosa Cosmestics</div>
<div class="t" style="left:561.00px;top:744.80px;font-size:13px;line-height:13px;color:#1296f0;font-weight:400;font-style:normal;letter-spacing:0.19px;-webkit-text-stroke:0.25px #1296f0;">Board Approval</div>
<div class="t" style="left:944.90px;top:739.84px;font-size:12px;line-height:12px;color:#222;font-weight:400;font-style:normal;letter-spacing:-0.31px;">CT-TubCosm23.03</div>
<div class="t" style="left:1331.9px;top:732.0px;width:25px;height:25px;border-radius:50%;box-sizing:border-box;border:2px solid #c80000;color:#1795ef;font-size:11px;font-weight:700;line-height:22px;text-align:center;">3</div>
<div class="t" style="left:1307.00px;width:300px;text-align:center;top:739.69px;font-size:11px;line-height:11px;color:#1296f0;font-weight:700;font-style:normal;">3</div>
<div class="r" style="left:551px;top:801px;width:980px;height:1px;background:#d6d7da;"></div>
<div class="t" style="left:561.00px;top:770.78px;font-size:9px;line-height:9px;color:#8e8e8e;font-weight:400;font-style:normal;letter-spacing:-0.16px;">Pharma Tokio Glass Bottle</div>
<div class="t" style="left:561.00px;top:782.80px;font-size:13px;line-height:13px;color:#1296f0;font-weight:400;font-style:normal;letter-spacing:0.19px;-webkit-text-stroke:0.25px #1296f0;">Board Approval</div>
<div class="t" style="left:944.90px;top:777.84px;font-size:12px;line-height:12px;color:#222;font-weight:400;font-style:normal;letter-spacing:-0.45px;">PH-TK-BT.03</div>
<div class="t" style="left:1331.9px;top:770.0px;width:25px;height:25px;border-radius:50%;box-sizing:border-box;border:2px solid #c80000;color:#1795ef;font-size:11px;font-weight:700;line-height:22px;text-align:center;">3</div>
<div class="t" style="left:1307.00px;width:300px;text-align:center;top:777.69px;font-size:11px;line-height:11px;color:#1296f0;font-weight:700;font-style:normal;">3</div>
<div class="r" style="left:551px;top:839px;width:980px;height:1px;background:#d6d7da;"></div>
<div class="r" style="left:551px;top:804px;width:4px;height:33px;background:#5d9cf0;"></div>
<div class="t" style="left:561.00px;top:808.78px;font-size:9px;line-height:9px;color:#8e8e8e;font-weight:400;font-style:normal;letter-spacing:0px;">Pharma Tokio Dropper</div>
<div class="t" style="left:561.00px;top:820.80px;font-size:13px;line-height:13px;color:#1296f0;font-weight:400;font-style:normal;letter-spacing:0px;-webkit-text-stroke:0.25px #1296f0;">Design</div>
<div class="t" style="left:944.90px;top:815.84px;font-size:12px;line-height:12px;color:#222;font-weight:400;font-style:normal;letter-spacing:-0.48px;">PH-TK-DRO.02</div>
<div class="t" style="left:1331.9px;top:808.0px;width:25px;height:25px;border-radius:50%;box-sizing:border-box;border:2px solid #c80000;color:#1795ef;font-size:11px;font-weight:700;line-height:22px;text-align:center;">1</div>
<div class="t" style="left:1307.00px;width:300px;text-align:center;top:815.69px;font-size:11px;line-height:11px;color:#1296f0;font-weight:700;font-style:normal;">3</div>
<div class="r" style="left:551px;top:877px;width:980px;height:1px;background:#d6d7da;"></div>
<div class="r" style="left:551px;top:842px;width:4px;height:33px;background:#5d9cf0;"></div>
<div class="t" style="left:561.00px;top:846.78px;font-size:9px;line-height:9px;color:#8e8e8e;font-weight:400;font-style:normal;letter-spacing:0px;">Pharma Tokio Dropper</div>
<div class="t" style="left:561.00px;top:858.80px;font-size:13px;line-height:13px;color:#1296f0;font-weight:400;font-style:normal;letter-spacing:0px;-webkit-text-stroke:0.25px #1296f0;">Testing</div>
<div class="t" style="left:944.90px;top:853.84px;font-size:12px;line-height:12px;color:#222;font-weight:400;font-style:normal;letter-spacing:-0.48px;">PH-TK-DRO.05</div>
<div class="t" style="left:1331.9px;top:846.0px;width:25px;height:25px;border-radius:50%;box-sizing:border-box;border:2px solid #c80000;color:#1795ef;font-size:11px;font-weight:700;line-height:22px;text-align:center;">4</div>
<div class="r" style="left:551px;top:915px;width:980px;height:1px;background:#d6d7da;"></div>
<div class="r" style="left:551px;top:880px;width:4px;height:33px;background:#5d9cf0;"></div>
<div class="t" style="left:561.00px;top:884.78px;font-size:9px;line-height:9px;color:#8e8e8e;font-weight:400;font-style:normal;letter-spacing:0px;">Pharma Tokio Dropper</div>
<div class="t" style="left:561.00px;top:896.80px;font-size:13px;line-height:13px;color:#1296f0;font-weight:400;font-style:normal;letter-spacing:0px;-webkit-text-stroke:0.25px #1296f0;">Task review</div>
<div class="t" style="left:944.90px;top:891.84px;font-size:12px;line-height:12px;color:#222;font-weight:400;font-style:normal;letter-spacing:-0.48px;">PH-TK-DRO.08</div>
<div class="t" style="left:1331.9px;top:884.0px;width:25px;height:25px;border-radius:50%;box-sizing:border-box;border:2px solid #c80000;color:#1795ef;font-size:11px;font-weight:700;line-height:22px;text-align:center;">2</div>
</body></html>
